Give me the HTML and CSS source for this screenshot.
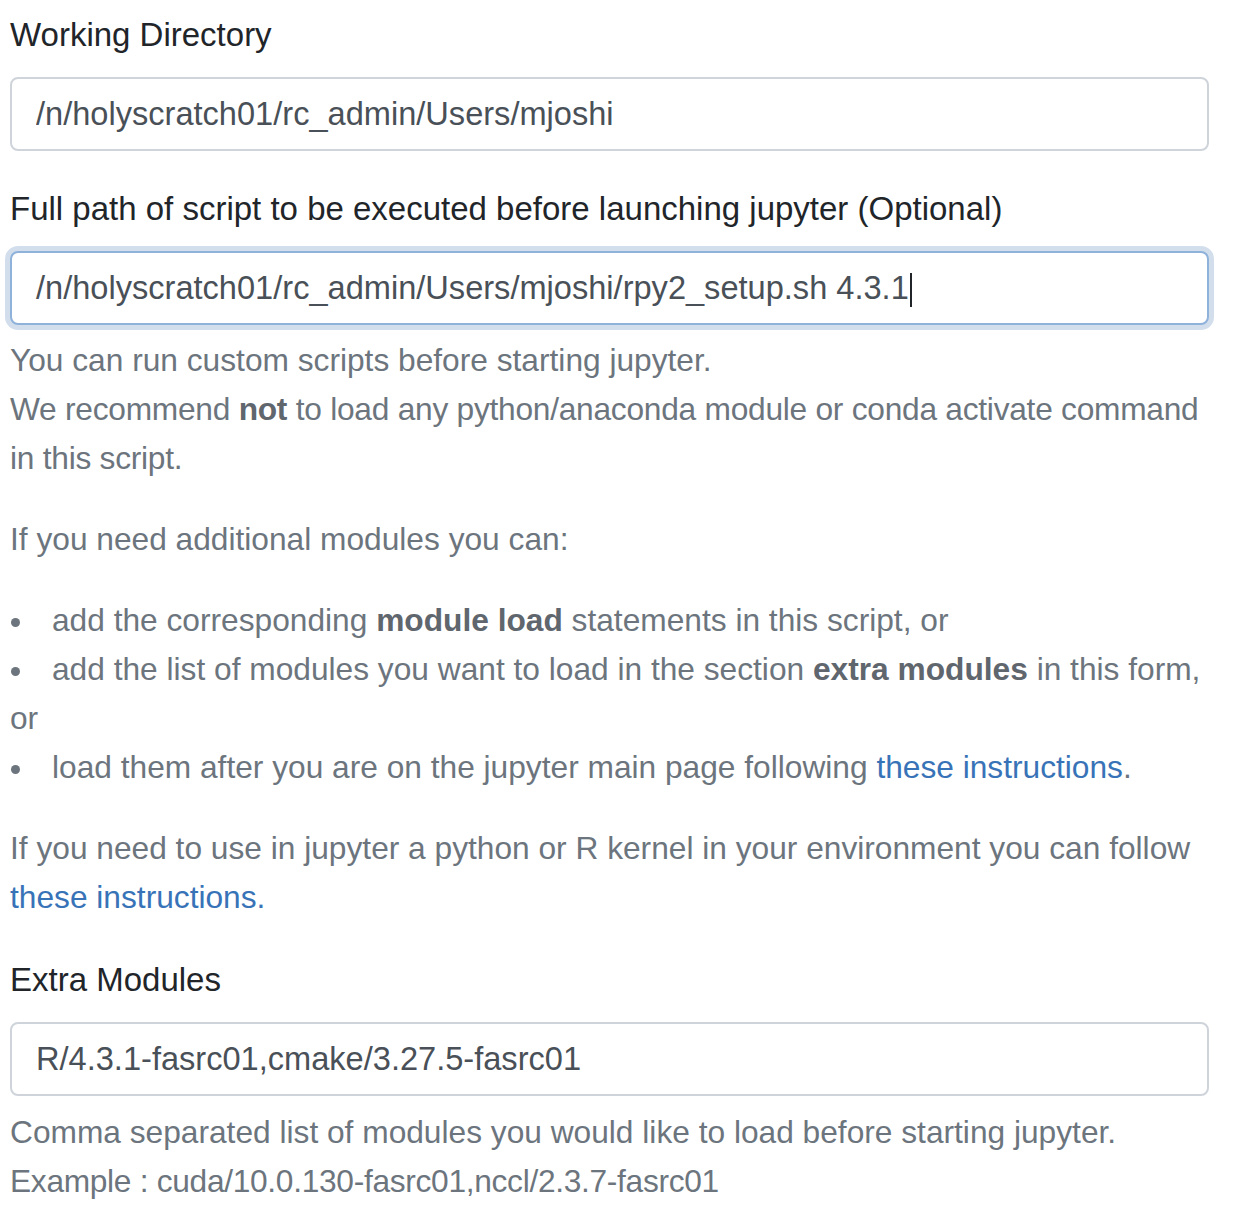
FILE: index.html
```html
<!DOCTYPE html>
<html lang="en">
<head>
<meta charset="utf-8">
<title>Jupyter form</title>
<link rel="stylesheet" href="styles.css">
</head>
<body>
<form class="form">
  <div class="form-group">
    <label class="label" for="wd">Working Directory</label>
    <input class="form-control" id="wd" type="text" value="/n/holyscratch01/rc_admin/Users/mjoshi">
  </div>

  <div class="form-group">
    <label class="label">Full path of script to be executed before launching jupyter (Optional)</label>
    <div class="form-control focused" role="textbox">/n/holyscratch01/rc_admin/Users/mjoshi/rpy2_setup.sh 4.3.1<span class="caret"></span></div>
    <div class="form-text">
      <p class="para">You can run custom scripts before starting jupyter.<br><span class="tight">We recommend <strong>not</strong> to load any python/anaconda module or conda activate command in this script.</span></p>
      <p class="para">If you need additional modules you can:</p>
      <ul class="list">
        <li class="item">add the corresponding <strong>module load</strong> statements in this script, or</li>
        <li class="item">add the list of modules you want to load in the section <strong>extra modules</strong> in this form, or</li>
        <li class="item">load them after you are on the jupyter main page following <a class="link" href="#">these instructions</a>.</li>
      </ul>
      <p class="para last">If you need to use in jupyter a python or R kernel in your environment you can follow <a class="link" href="#">these instructions.</a></p>
    </div>
  </div>

  <div class="form-group">
    <label class="label" for="em">Extra Modules</label>
    <input class="form-control" id="em" type="text" value="R/4.3.1-fasrc01,cmake/3.27.5-fasrc01">
    <div class="form-text narrow">
      <p class="para last">Comma separated list of modules you would like to load before starting jupyter.<br><span class="example">Example : cuda/10.0.130-fasrc01,nccl/2.3.7-fasrc01</span></p>
    </div>
  </div>
</form>
</body>
</html>
```

FILE: styles.css
```css
* { box-sizing: border-box; }
html, body { margin: 0; padding: 0; background: #fff; }
body {
  font-family: "Liberation Sans", Arial, sans-serif;
  color: #212529;
}
.form {
  width: 1199px;
  margin-left: 10px;
  padding-top: 11px;
}
.form-group { margin-bottom: 34px; }
.label {
  display: block;
  font-size: 33px;
  line-height: 48px;
  margin-bottom: 18px;
  color: #212529;
}
.form-control {
  display: block;
  width: 100%;
  height: 74px;
  padding: 0 24px;
  font-family: inherit;
  font-size: 32.6px;
  line-height: 72px;
  color: #495057;
  background: #fff;
  border: 2px solid #ced4da;
  border-radius: 8px;
  outline: none;
  white-space: nowrap;
}
.focused {
  height: 74px;
  line-height: 70px;
  border-color: #8fb2da;
  box-shadow: 0 0 0 5px #d3deed;
}
.caret {
  display: inline-block;
  width: 2px;
  height: 34px;
  background: #212529;
  vertical-align: middle;
  margin-left: 1px;
}
.form-text {
  margin-top: 11px;
  font-size: 31.7px;
  line-height: 49px;
  color: #6c757d;
}
.tight { letter-spacing: -0.25px; }
.example { letter-spacing: -0.3px; }
.para { margin: 0 0 32px; }
.para.last { margin-bottom: 0; }
.form-text strong { font-weight: 700; color: #5f666d; }
.list { list-style: none; margin: 0 0 32px; padding: 0; }
.item::before {
  content: "";
  display: inline-block;
  width: 9px;
  height: 9px;
  border-radius: 50%;
  background: #6c757d;
  margin-left: 1px;
  margin-right: 32px;
  vertical-align: middle;
}
.link { color: #3873b8; text-decoration: none; }
.narrow { margin-top: 12px; }
```
